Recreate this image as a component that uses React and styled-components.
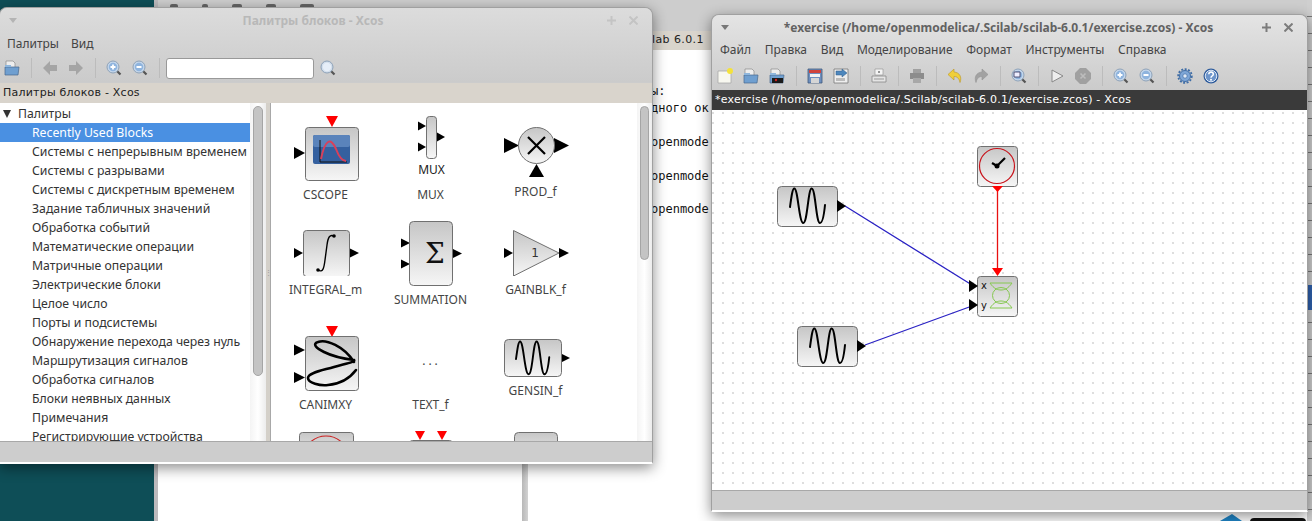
import React from "react"
import styled, {createGlobalStyle} from "styled-components"

const GlobalStyle=createGlobalStyle`
    html,body{
        margin:0;
        padding:0;
        background:#0e4e57;
    }
`

const UI_FONT=`"Noto Sans","Open Sans",sans-serif`

const Desktop=styled.div`
    position:relative;
    width:1312px;
    height:521px;
    overflow:hidden;
    background:#0e4e57;
    font-family:${UI_FONT};
`

/* scilab console behind the two xcos windows */
const ConsoleWindow=styled.div`
    position:absolute;
    left:154px;
    top:0;
    right:0;
    bottom:0;
    display:flex;
    flex-direction:column;
    background:#fff;
    border-left:4px solid #bdbabd;
`
const ConsoleToolbar=styled.div`
    height:27px;
    flex:none;
    background:#cdcdcd;
    display:flex;
    align-items:flex-start;
    gap:24px;
    padding:4px 0 0 12px;
`
const ConsoleToolMark=styled.span`
    width:${p=>p.$w || 8}px;
    height:3px;
    background:#666;
    border-radius:2px 2px 0 0;
`
const ConsoleTab=styled.div`
    height:19px;
    flex:none;
    background:#d9d4cc;
    font:11px/17px "DejaVu Sans",sans-serif;
    letter-spacing:0.4px;
    color:#222;
    padding-left:494px;
`
const ConsolePanes=styled.div`
    flex:1;
    display:flex;
`
const LeftPane=styled.div`
    width:364px;
    flex:none;
    background:#fff;
`
const PaneDivider=styled.div`
    width:6px;
    flex:none;
    background:linear-gradient(90deg,#b8b8b8,#d2d2d2);
`
const ConsoleText=styled.pre`
    margin:0;
    flex:1;
    padding:33px 0 0 123px;
    font:12px/16.9px "DejaVu Sans Mono",monospace;
    color:#111;
`
const EdgeStrip=styled.div`
    position:absolute;
    right:0;
    top:0;
    bottom:0;
    width:5px;
    background:repeating-linear-gradient(180deg,#cfcfcf 0 16px,#777 16px 17px);
`
const EdgeChip=styled.div`
    position:absolute;
    right:0;
    top:285px;
    width:4px;
    height:25px;
    background:#2f62b0;
`
const DockIcons=styled.svg`
    position:absolute;
    left:1210px;
    top:511px;
`

/* windows */
const Window=styled.div`
    position:absolute;
    left:${p=>p.$left}px;
    top:${p=>p.$top}px;
    width:${p=>p.$width}px;
    height:${p=>p.$height}px;
    display:flex;
    flex-direction:column;
    box-sizing:border-box;
    border-radius:8px 8px 0 0;
    border:1px solid #a0a0a0;
    border-bottom:2px solid #fff;
    background:#ccc;
    box-shadow:0 4px 14px rgba(0,0,0,.45);
    overflow:hidden;
`
const Chrome=styled.div`
    flex:none;
    background:linear-gradient(180deg,${p=>p.$active ? "#e4e4e4" : "#dcdcdc"} 0,#cbcbcb 100%);
`
const TitleBar=styled.div`
    height:${p=>p.$h}px;
    display:flex;
    align-items:center;
    justify-content:space-between;
    padding:0 14px 0 ${p=>p.$left}px;
`
const TitleText=styled.div`
    flex:1;
    text-align:center;
    font-size:12px;
    font-weight:700;
    white-space:nowrap;
    color:${p=>p.$active ? "#626262" : "#b8b8b8"};
    padding-left:${p=>p.$shift}px;
`
const MenuArrow=styled.span`
    width:0;
    height:0;
    border-left:4px solid transparent;
    border-right:4px solid transparent;
    border-top:5px solid ${p=>p.$active ? "#777" : "#b4b4b4"};
`
const TitleButtons=styled.div`
    display:flex;
    gap:13px;
    align-items:center;
`
const MenuBar=styled.div`
    height:22px;
    box-sizing:border-box;
    display:flex;
    align-items:center;
    gap:${p=>p.$gap}px;
    padding-left:${p=>p.$left}px;
    padding-bottom:${p=>p.$pb || 0}px;
    font-size:12px;
    color:#444;
`
const ToolBar=styled.div`
    height:28px;
    display:flex;
    align-items:center;
    gap:10px;
    padding-left:${p=>p.$left}px;
    box-sizing:border-box;
`
const ToolSep=styled.span`
    width:1px;
    height:20px;
    margin:0 .5px;
    background:#bcbcbc;
`
const SearchField=styled.div`
    width:148px;
    height:21px;
    box-sizing:border-box;
    background:#fff;
    border:1px solid #999;
    border-radius:3px;
    margin:0 -4px 0 -4px;
`
const PathStrip=styled.div`
    flex:none;
    height:20px;
    box-sizing:border-box;
    font:11px/20px "DejaVu Sans",sans-serif;
    letter-spacing:0.22px;
    white-space:nowrap;
    padding-left:${p=>p.$left}px;
    background:${p=>p.$dark ? "#3a3a3a" : "#d9d4cc"};
    color:${p=>p.$dark ? "#fff" : "#222"};
    margin-top:${p=>p.$dark ? 0 : 1}px;
`
const StatusBar=styled.div`
    flex:none;
    height:${p=>p.$h}px;
    background:#cdcdcd;
    border-top:1px solid #a8a8a8;
    box-sizing:border-box;
`

/* palette browser */
const PaletteBody=styled.div`
    flex:1;
    display:flex;
    min-height:0;
`
const Tree=styled.div`
    width:250px;
    flex:none;
    background:#fff;
    overflow:hidden;
    padding-top:1px;
    font-size:12.25px;
    color:#333;
`
const TreeRoot=styled.div`
    height:19px;
    display:flex;
    align-items:center;
    gap:7px;
    padding-left:3px;
`
const TreeArrow=styled.span`
    width:0;
    height:0;
    border-left:4px solid transparent;
    border-right:4px solid transparent;
    border-top:8px solid #333;
`
const TreeRow=styled.div`
    height:19px;
    line-height:19px;
    padding-left:32px;
    white-space:nowrap;
    background:${p=>p.$selected ? "#4a90e2" : "transparent"};
    color:${p=>p.$selected ? "#fff" : "#333"};
`
const ScrollTrack=styled.div`
    width:${p=>p.$w}px;
    flex:none;
    box-sizing:border-box;
    padding:3px 3px 0;
    background:linear-gradient(90deg,#f4f4f4,#fff 50%,#ececec);
`
const ScrollThumb=styled.div`
    height:${p=>p.$h}px;
    box-sizing:border-box;
    border:1px solid #a5a5a5;
    border-radius:5px;
    background:#c4c4c4;
`
const Splitter=styled.div`
    width:4px;
    flex:none;
    background:#d4d0c9;
    border-right:1px solid #a8a8a8;
    display:flex;
    align-items:center;
    justify-content:center;
    color:#999;
    font-size:7px;
    line-height:3px;
`
const BlockPanel=styled.div`
    width:366px;
    flex:none;
    background:#fff;
    overflow:hidden;
`
const BlockGrid=styled.div`
    display:grid;
    grid-template-columns:repeat(3,105px);
    grid-auto-rows:105px;
    padding:13px 0 0 3px;
`
const BlockCell=styled.div`
    display:flex;
    flex-direction:column;
    align-items:center;
`
const BlockLabel=styled.div`
    margin:6px 2px 0 0;
    font-size:12px;
    line-height:15px;
    color:#444;
    white-space:nowrap;
`
const DotsText=styled.div`
    height:65px;
    padding-top:27px;
    box-sizing:border-box;
    font-size:12px;
    line-height:15px;
    letter-spacing:3px;
    color:#444;
`

/* diagram */
const Canvas=styled.div`
    flex:1;
    min-height:0;
    background-color:#fff;
    background-image:radial-gradient(circle at 5px 5px,#d2d2d2 0.6px,transparent 1px);
    background-size:10px 10px;
    background-position:-4px -2px;
`

/* shared svg bits */
const BlockGradient=({id})=>(
    <linearGradient id={id} x1="0" y1="0" x2="0" y2="1">
        <stop offset="0" stopColor="#c6c6c6"/>
        <stop offset="1" stopColor="#f6f6f6"/>
    </linearGradient>
)
const Body=({x,y,w,h,r=3})=>(
    <rect x={x+0.5} y={y+0.5} width={w} height={h} rx={r} fill="url(#blockFill)" stroke="#707070"/>
)
const Sine=({x,y,s=1})=>(
    <path transform={`translate(${x} ${y}) scale(${s})`} fill="none" stroke="#000" strokeWidth="2" strokeLinecap="round"
        d="M0 19 C1.5 8 2.5 .5 4.3 .5 C8 .5 9 35 13.3 35 C17.5 35 18 .5 21.7 .5 C25.5 .5 26 35 30 35 C32.5 35 34 27 35 17"/>
)
const Right=({x,y,w=9,h=11,fill="#000"})=>(
    <polygon points={`${x},${y-h/2} ${x+w},${y} ${x},${y+h/2}`} fill={fill}/>
)
const Down=({x,y,w=11,h=11,fill="#f00"})=>(
    <polygon points={`${x-w/2},${y} ${x+w/2},${y} ${x},${y+h}`} fill={fill}/>
)

/* toolbar icons */
const Ico=styled.svg`
    width:16px;
    height:16px;
    flex:none;
    display:block;
`
const FolderIcon=({dark})=>(
    <Ico viewBox="0 0 16 16">
        <path d="M2 1h7l2 2v5H2z" fill="#eee" stroke="#8a8a8a" strokeWidth=".7"/>
        <path d="M1 7h14l-1 8H1z" fill="#6f9fd0" stroke="#48688c" strokeWidth=".7"/>
        <path d="M1 5h6v2H1z" fill="#8fb6dc"/>
        {dark && <path d="M3 10h11v5H3z" fill="#1a1a1a"/>}
        {dark && <circle cx="7" cy="12" r="1.2" fill="#c22"/>}
    </Ico>
)
const NewIcon=()=>(
    <Ico viewBox="0 0 16 16">
        <path d="M1 3h13v12H1z" fill="#f8f8f0" stroke="#a8a8a8" strokeWidth=".8"/>
        <circle cx="13" cy="3" r="3" fill="#f4e23c"/>
    </Ico>
)
const SaveIcon=()=>(
    <Ico viewBox="0 0 16 16">
        <path d="M1 1h14v14H1z" fill="#6d8fbe" stroke="#40587c" strokeWidth=".8"/>
        <path d="M2 2h12v3H2z" fill="#d0433c"/>
        <path d="M3 6h10v3H3z" fill="#f2f2f2"/>
        <path d="M4 10h8v5H4z" fill="#d5d5d5"/>
    </Ico>
)
const SaveAsIcon=()=>(
    <Ico viewBox="0 0 16 16">
        <path d="M1 1h14v14H1z" fill="#eee" stroke="#777" strokeWidth=".8"/>
        <path d="M3 10h9v3H3z" fill="#bbb"/>
        <path d="M3 3h6V1l5 4-5 4V7H3z" fill="#4d87bd" stroke="#2f5a85" strokeWidth=".5"/>
    </Ico>
)
const PageSetupIcon=()=>(
    <Ico viewBox="0 0 16 16">
        <path d="M4 1h8v6H4z" fill="#f4f4f4" stroke="#999" strokeWidth=".7"/>
        <path d="M7 4h2M8 3v2" stroke="#777"/>
        <path d="M1 8h14v6H1z" fill="#e4e4e4" stroke="#888" strokeWidth=".8"/>
        <path d="M3 11h10" stroke="#999"/>
    </Ico>
)
const PrinterIcon=()=>(
    <Ico viewBox="0 0 16 16">
        <path d="M4 1h8v4H4z" fill="#a0a0a0"/>
        <path d="M1 5h14v6H1z" fill="#8c8c8c"/>
        <path d="M4 10h8v5H4z" fill="#a8a8a8"/>
    </Ico>
)
const UndoIcon=({redo})=>(
    <Ico viewBox="0 0 16 16">
        <path transform={redo ? "translate(16 0) scale(-1 1)" : undefined} d="M7 1L1 6.5 7 12V8.5c3 0 5 1.5 6 6 2-5 0-10-6-10.500z"
            fill={redo ? "#a2a2a2" : "#f0cf3a"} stroke={redo ? "#949494" : "#b8962a"} strokeWidth=".6"/>
    </Ico>
)
const ArrowIcon=({flip})=>(
    <Ico viewBox="0 0 16 16">
        <path transform={flip ? "translate(16 0) scale(-1 1)" : undefined} d="M1 8l7-7v4h7v6H8v4z" fill="#a5a5a5"/>
    </Ico>
)
const ZoomIcon=({sign,fit})=>(
    <Ico viewBox="0 0 16 16">
        <path d="M11 11l3.500 3.500" stroke="#555" strokeWidth="2.200"/>
        <circle cx="7" cy="7" r="6" fill={sign==="none" ? "#d2deec" : "#c4d6ea"} stroke="#8ea2b8"/>
        <circle cx="7" cy="7" r="4.200" fill={sign==="none" ? "#e6eef8" : "#8fb4de"}/>
        {sign!=="none" && !fit && <path d="M4.500 7h5" stroke="#fff" strokeWidth="1.800"/>}
        {sign==="plus" && <path d="M7 4.500v5" stroke="#fff" strokeWidth="1.800"/>}
        {fit && <path d="M3 4h6v5H3z" fill="#eef" stroke="#446" strokeWidth=".9"/>}
    </Ico>
)
const PlayIcon=()=>(
    <Ico viewBox="0 0 16 16">
        <polygon points="3,2 14,8 3,14" fill="#eee" stroke="#888"/>
    </Ico>
)
const StopIcon=()=>(
    <Ico viewBox="0 0 16 16">
        <polygon points="5,0 11,0 16,5 16,11 11,16 5,16 0,11 0,5" fill="#a0a0a0"/>
        <path d="M5.500 5.500l5 5M10.500 5.500l-5 5" stroke="#bdbdbd" strokeWidth="1.600"/>
    </Ico>
)
const GearIcon=()=>(
    <Ico viewBox="0 0 16 16">
        <circle cx="8" cy="8" r="5.500" fill="#7ea6d6" stroke="#3f6da6"/>
        <circle cx="8" cy="8" r="6.800" fill="none" stroke="#3f6da6" strokeWidth="1.800" strokeDasharray="2 1.500"/>
        <circle cx="8" cy="8" r="2.200" fill="#dfe9f5" stroke="#3f6da6" strokeWidth=".7"/>
    </Ico>
)
const HelpIcon=()=>(
    <Ico viewBox="0 0 16 16">
        <circle cx="8" cy="8" r="7.500" fill="#2f5c9c"/>
        <circle cx="8" cy="8" r="5.800" fill="#6d95cb" stroke="#dfe8f4"/>
        <path d="M5.800 6.200c0-3 4.500-3 4.500 0 0 1.800-2.300 1.800-2.300 3.500" fill="none" stroke="#fff" strokeWidth="1.500"/>
        <circle cx="8" cy="11.800" r="1" fill="#fff"/>
    </Ico>
)
const PlusButton=({color})=>(
    <svg width="9" height="9" viewBox="0 0 9 9"><path d="M4.500 0v9M0 4.500h9" stroke={color} strokeWidth="2"/></svg>
)
const CloseButton=({color})=>(
    <svg width="9" height="9" viewBox="0 0 9 9"><path d="M.5 .5l8 8M8.500 .5l-8 8" stroke={color} strokeWidth="2"/></svg>
)

/* palette block drawings, one per grid cell. x,y are local to a 105px wide cell */
const BlockSvg=({h,children})=>(
    <svg width="105" height={h} viewBox={`0 0 105 ${h}`}>{children}</svg>
)

const CScopeBlock=()=>(
    <BlockSvg h={65}>
        <Down x={58} y={0} w={12}/>
        <Right x={20} y={37} w={11} h={12}/>
        <Body x={31} y={11} w={53} h={53}/>
        <rect x="39" y="19" width="37" height="29" rx="2" fill="#34609f"/>
        <rect x="39" y="19" width="37" height="12" rx="2" fill="#5a83bb"/>
        <path d="M46 24v22h27" fill="none" stroke="#111"/>
        <path d="M47 43c4-20 10-22 15-10 3 8 6 12 10 12" fill="none" stroke="#d8405a" strokeWidth="2"/>
    </BlockSvg>
)
const MuxBlock=()=>(
    <BlockSvg h={65}>
        <Right x={39} y={10} w={8} h={9}/>
        <Right x={39} y={31} w={8} h={9}/>
        <Right x={58} y={21} w={8} h={9}/>
        <Body x={47} y={0} w={10} h={42}/>
        <text x="52.500" y="58" textAnchor="middle" fontSize="12" fill="#222" fontFamily="Noto Sans">MUX</text>
    </BlockSvg>
)
const ProdBlock=()=>(
    <BlockSvg h={62}>
        <Right x={20} y={29.500} w={15} h={15}/>
        <Right x={70} y={29.500} w={15} h={15}/>
        <polygon points="45,61 60,61 52.500,48" fill="#000"/>
        <circle cx="52.500" cy="29.500" r="18" fill="url(#blockFill)" stroke="#707070"/>
        <path d="M44 21l17 17M61 21L44 38" stroke="#000" strokeWidth="2.200"/>
    </BlockSvg>
)
const IntegralBlock=()=>(
    <BlockSvg h={55}>
        <Right x={20} y={32} w={9} h={10}/>
        <Right x={75} y={32} w={10} h={10}/>
        <Body x={29} y={9} w={46} h={46}/>
        <path d="M44 49c5 3 6-2 7-10l2-15c1-8 3-11 7-9" fill="none" stroke="#000" strokeWidth="1.400"/>
        <circle cx="44" cy="49" r="1.800"/>
        <circle cx="60" cy="15" r="1.800"/>
    </BlockSvg>
)
const SumBlock=()=>(
    <BlockSvg h={65}>
        <Right x={22} y={22} w={9} h={9}/>
        <Right x={22} y={43} w={9} h={9}/>
        <Right x={74} y={32.500} w={9} h={9}/>
        <Body x={30} y={0} w={43} h={64} r={4}/>
        <text x="56" y="42" textAnchor="middle" fontSize="28" fill="#111" fontFamily="DejaVu Serif">Σ</text>
    </BlockSvg>
)
const GainBlock=()=>(
    <BlockSvg h={55}>
        <Right x={20} y={32} w={9} h={10}/>
        <Right x={75} y={32} w={10} h={10}/>
        <polygon points="29.500,9.500 75,32 29.500,55" fill="url(#blockFill)" stroke="#707070"/>
        <text x="51" y="36" textAnchor="middle" fontSize="12" fill="#333" fontFamily="DejaVu Sans">1</text>
    </BlockSvg>
)
const AnimXYBlock=()=>(
    <BlockSvg h={65}>
        <Down x={58} y={0} w={12}/>
        <Right x={20} y={24} w={11} h={11}/>
        <Right x={20} y={51.500} w={11} h={11}/>
        <Body x={31} y={10} w={53} h={54}/>
        <path d="M80 36C70 20 52 13 44 16C38 18 42 22 50 26C60 31 72 33 80 34C82 36 70 38 60 41C46 45 34 47 34 52C34 57 46 60 54 59C66 58 76 52 82 44"
            fill="none" stroke="#000" strokeWidth="2.600" strokeLinecap="round"/>
    </BlockSvg>
)
const GensinBlock=()=>(
    <BlockSvg h={51}>
        <Right x={78} y={32} w={8} h={8}/>
        <Body x={20} y={13} w={57} h={37} r={4}/>
        <Sine x={32} y={15} s={0.95}/>
    </BlockSvg>
)
const ClockPeek=()=>(
    <BlockSvg h={20}>
        <Body x={25} y={1} w={54} h={30}/>
        <circle cx="52" cy="28" r="23" fill="none" stroke="#c22" strokeWidth="1.200"/>
    </BlockSvg>
)
const TwoClockPeek=()=>(
    <BlockSvg h={20}>
        <Body x={30} y={9} w={43} h={30}/>
        <Down x={41} y={0} w={10} h={9}/>
        <Down x={63} y={0} w={10} h={9}/>
    </BlockSvg>
)
const PlainPeek=()=>(
    <BlockSvg h={20}>
        <Body x={30} y={1} w={43} h={30} r={4}/>
    </BlockSvg>
)

/* the diagram uses page coordinates through its viewBox */
const Diagram=()=>(
    <svg width="595" height="380" viewBox="712 110 595 380" style={{display:"block"}}>
        <path d="M845 206L972 285M865 345L972 306" fill="none" stroke="#2a22c4" strokeWidth="1.300"/>
        <path d="M997.500 190V270" stroke="#e81010" strokeWidth="1.300"/>

        <Body x={777} y={186} w={60} h={40} r={4}/>
        <Sine x={790} y={188}/>
        <polygon points="837,200 846,206 837,212" fill="#000"/>

        <Body x={797} y={326} w={60} h={40} r={4}/>
        <Sine x={810} y={328}/>
        <polygon points="857,340 866,346 857,352" fill="#000"/>

        <Body x={977} y={146} w={40} h={40}/>
        <circle cx="997" cy="166" r="17.500" fill="none" stroke="#c8141c" strokeWidth="1.200"/>
        <path d="M997 166l8-8" stroke="#000" strokeWidth="2.200"/>
        <path d="M997 166l-5-3" stroke="#000" strokeWidth="2.200"/>
        <circle cx="997" cy="166" r="2.500"/>
        <polygon points="992,186 1003,186 997.500,192" fill="#f00"/>

        <Body x={977} y={276} w={40} h={40}/>
        <polygon points="992,268 1003,268 997.500,276" fill="#f00"/>
        <polygon points="969,280 978,286 969,292" fill="#000"/>
        <polygon points="969,299 978,305 969,311" fill="#000"/>
        <text x="981" y="289" fontSize="10" fill="#111" fontFamily="DejaVu Sans">x</text>
        <text x="981" y="309" fontSize="10" fill="#111" fontFamily="DejaVu Sans">y</text>
        <path d="M990 283h22M990 283c4 6 8 7 11 7s7-1 11-7M990 308h22M990 308c4-6 8-7 11-7s7 1 11 7"
            fill="none" stroke="#86c850" strokeWidth="1"/>
        <ellipse cx="1001" cy="295.500" rx="8.500" ry="8" fill="none" stroke="#86c850" strokeWidth="1"/>
    </svg>
)

const treeRows=[
    "Recently Used Blocks",
    "Системы с непрерывным временем",
    "Системы с разрывами",
    "Системы с дискретным временем",
    "Задание табличных значений",
    "Обработка событий",
    "Математические операции",
    "Матричные операции",
    "Электрические блоки",
    "Целое число",
    "Порты и подсистемы",
    "Обнаружение перехода через нуль",
    "Маршрутизация сигналов",
    "Обработка сигналов",
    "Блоки неявных данных",
    "Примечания",
    "Регистрирующие устройства",
]

const paletteBlocks=[
    {label:"CSCOPE", Draw:CScopeBlock},
    {label:"MUX", Draw:MuxBlock},
    {label:"PROD_f", Draw:ProdBlock},
    {label:"INTEGRAL_m", Draw:IntegralBlock},
    {label:"SUMMATION", Draw:SumBlock},
    {label:"GAINBLK_f", Draw:GainBlock},
    {label:"CANIMXY", Draw:AnimXYBlock},
    {label:"TEXT_f", Draw:()=><DotsText>...</DotsText>},
    {label:"GENSIN_f", Draw:GensinBlock},
    {Draw:ClockPeek},
    {Draw:TwoClockPeek},
    {Draw:PlainPeek},
]

const mainMenu=["Файл","Правка","Вид","Моделирование","Формат","Инструменты","Справка"]

const App=()=>{
    return(
        <Desktop>
            <GlobalStyle/>
            <svg width="0" height="0" style={{position:"absolute"}}>
                <defs><BlockGradient id="blockFill"/></defs>
            </svg>

            <ConsoleWindow>
                <ConsoleToolbar>
                    <ConsoleToolMark/><ConsoleToolMark $w={6}/><ConsoleToolMark $w={10}/><ConsoleToolMark $w={10}/><ConsoleToolMark $w={14}/>
                </ConsoleToolbar>
                <ConsoleTab>lab 6.0.1</ConsoleTab>
                <ConsolePanes>
                    <LeftPane/>
                    <PaneDivider/>
                    <ConsoleText>{"ы:\nдного ок\n\nopenmode\n\nopenmode\n\nopenmode"}</ConsoleText>
                </ConsolePanes>
                <EdgeStrip/>
                <EdgeChip/>
            </ConsoleWindow>
            <DockIcons width="102" height="10" viewBox="0 0 102 10">
                <polygon points="10,10 22,3 32,10" fill="#1f86c8"/>
                <rect x="40" y="7" width="56" height="10" rx="4" fill="#111"/>
            </DockIcons>

            <Window $left={-1} $top={7} $width={654} $height={457}>
                <Chrome>
                    <TitleBar $h={24} $left={9}>
                        <MenuArrow/>
                        <TitleText $shift={2}>Палитры блоков - Xcos</TitleText>
                        <TitleButtons>
                            <PlusButton color="#c4c4c4"/>
                            <CloseButton color="#c4c4c4"/>
                        </TitleButtons>
                    </TitleBar>
                    <MenuBar $gap={12} $left={7}>
                        <span>Палитры</span>
                        <span>Вид</span>
                    </MenuBar>
                    <ToolBar $left={4}>
                        <FolderIcon/>
                        <ToolSep/>
                        <ArrowIcon/>
                        <ArrowIcon flip/>
                        <ToolSep/>
                        <ZoomIcon sign="plus"/>
                        <ZoomIcon sign="minus"/>
                        <ToolSep/>
                        <SearchField/>
                        <ZoomIcon sign="none"/>
                    </ToolBar>
                </Chrome>
                <PathStrip $left={3}>Палитры блоков - Xcos</PathStrip>
                <PaletteBody>
                    <Tree>
                        <TreeRoot><TreeArrow/>Палитры</TreeRoot>
                        {treeRows.map((row,i)=>(
                            <TreeRow key={row} $selected={i===0}>{row}</TreeRow>
                        ))}
                    </Tree>
                    <ScrollTrack $w={16}><ScrollThumb $h={270}/></ScrollTrack>
                    <Splitter>⋮</Splitter>
                    <BlockPanel>
                        <BlockGrid>
                            {paletteBlocks.map(({label,Draw},i)=>(
                                <BlockCell key={i}>
                                    <Draw/>
                                    {label && <BlockLabel>{label}</BlockLabel>}
                                </BlockCell>
                            ))}
                        </BlockGrid>
                    </BlockPanel>
                    <ScrollTrack $w={15}><ScrollThumb $h={154}/></ScrollTrack>
                </PaletteBody>
                <StatusBar $h={21}/>
            </Window>

            <Window $left={711} $top={14} $width={597} $height={498}>
                <Chrome $active>
                    <TitleBar $h={25} $left={9}>
                        <MenuArrow $active/>
                        <TitleText $active $shift={6}>*exercise (/home/openmodelica/.Scilab/scilab-6.0.1/exercise.zcos) - Xcos</TitleText>
                        <TitleButtons>
                            <PlusButton color="#7c7c7c"/>
                            <CloseButton color="#7c7c7c"/>
                        </TitleButtons>
                    </TitleBar>
                    <MenuBar $gap={13.7} $left={8} $pb={3}>
                        {mainMenu.map(item=><span key={item}>{item}</span>)}
                    </MenuBar>
                    <ToolBar $left={5}>
                        <NewIcon/>
                        <FolderIcon/>
                        <FolderIcon dark/>
                        <ToolSep/>
                        <SaveIcon/>
                        <SaveAsIcon/>
                        <ToolSep/>
                        <PageSetupIcon/>
                        <ToolSep/>
                        <PrinterIcon/>
                        <ToolSep/>
                        <UndoIcon/>
                        <UndoIcon redo/>
                        <ToolSep/>
                        <ZoomIcon fit/>
                        <ToolSep/>
                        <PlayIcon/>
                        <StopIcon/>
                        <ToolSep/>
                        <ZoomIcon sign="plus"/>
                        <ZoomIcon sign="minus"/>
                        <ToolSep/>
                        <GearIcon/>
                        <HelpIcon/>
                    </ToolBar>
                </Chrome>
                <PathStrip $dark $left={3}>*exercise (/home/openmodelica/.Scilab/scilab-6.0.1/exercise.zcos) - Xcos</PathStrip>
                <Canvas><Diagram/></Canvas>
                <StatusBar $h={20}/>
            </Window>
        </Desktop>
    )
}

export default App
